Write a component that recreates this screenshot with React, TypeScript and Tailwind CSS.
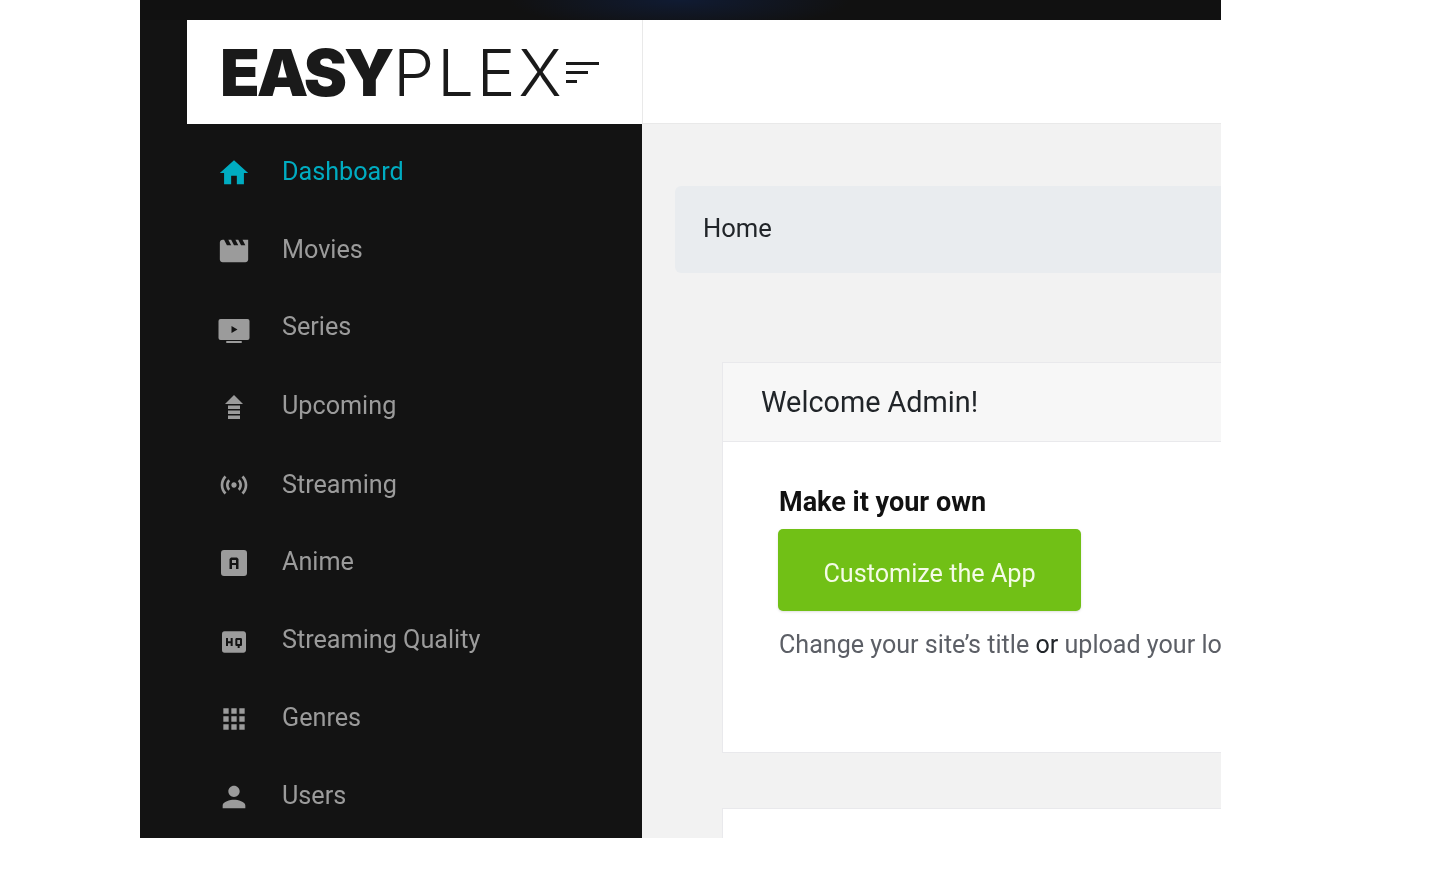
import React from "react";
import { MdHome, MdMovie, MdSensors, MdHighQuality, MdApps, MdPerson } from "react-icons/md";

const SeriesIcon = () => (
  <svg viewBox="0 0 32 24" className="h-[24px] w-[32px]" fill="currentColor">
    <path fillRule="evenodd" d="M2.500 0h27A2 2 0 0 1 31.500 2v17a2 2 0 0 1-2 2h-27a2 2 0 0 1-2-2V2a2 2 0 0 1 2-2Zm11 7v7l6-3.500Z" />
    <rect x="8" y="22" width="16" height="2" rx="1" />
  </svg>
);

const UpcomingIcon = () => (
  <svg viewBox="0 0 20 28" className="h-[28px] w-[20px]" fill="currentColor">
    <path d="M10 1 19 10H1Z" />
    <rect x="4" y="11.500" width="12" height="3.500" />
    <rect x="4" y="16.500" width="12" height="3.500" />
    <rect x="4" y="21.500" width="12" height="3.500" />
  </svg>
);

const AnimeIcon = () => (
  <svg viewBox="0 0 26 26" className="h-[26px] w-[26px]" fill="currentColor">
    <path
      fillRule="evenodd"
      d="M3 0h20a3 3 0 0 1 3 3v20a3 3 0 0 1-3 3H3a3 3 0 0 1-3-3V3a3 3 0 0 1 3-3Zm7 7.500-1.500 1.500v10h2.500v-4h4v4h2.500V9L16 7.500Zm1 2.500h4v3h-4Z"
    />
  </svg>
);

const items: { label: string; icon: React.ReactNode; active?: boolean; h: string; shift: string }[] = [
  { label: "Dashboard", icon: <MdHome size={34} />, active: true, h: "h-[78px]", shift: "mt-[2px]" },
  { label: "Movies", icon: <MdMovie size={34} />, h: "h-[78px]", shift: "mt-[2px]" },
  { label: "Series", icon: <SeriesIcon />, h: "h-[76px]", shift: "mt-[8px]" },
  { label: "Upcoming", icon: <UpcomingIcon />, h: "h-[82px]", shift: "mt-[4px]" },
  { label: "Streaming", icon: <MdSensors size={32} />, h: "h-[76px]", shift: "mt-0" },
  { label: "Anime", icon: <AnimeIcon />, h: "h-[78px]", shift: "mt-[2px]" },
  { label: "Streaming Quality", icon: <MdHighQuality size={32} />, h: "h-[78px]", shift: "mt-[4px]" },
  { label: "Genres", icon: <MdApps size={32} />, h: "h-[78px]", shift: "mt-[2px]" },
  { label: "Users", icon: <MdPerson size={34} />, h: "h-[78px]", shift: "mt-[2px]" },
];

export default function App() {
  return (
    <div className="h-[892px] w-[1448px] overflow-hidden bg-white font-['Roboto',sans-serif]">
      <div className="ml-[140px] flex h-[838px] w-[1081px] flex-col overflow-hidden blur-[0.4px]">
        <div className="h-5 shrink-0 bg-[#111111] bg-[radial-gradient(ellipse_170px_30px_at_540px_0px,#101b33,#111111)]" />
        <div className="flex min-h-0 flex-1">
          <aside className="flex w-[502px] shrink-0 flex-col bg-[#131313]">
            <div className="ml-[47px] flex h-[104px] shrink-0 items-center bg-white pl-[33px] font-['Inter',sans-serif] leading-none text-[#1a1a1a]">
              <span className="text-[65px] font-black tracking-[-3px]">EASY</span>
              <span className="ml-[2px] text-[65px] font-light tracking-[3px]">PLEX</span>
              <span className="ml-[1px] flex flex-col gap-[6px]">
                <span className="h-[3px] w-[33px] bg-[#1a1a1a]" />
                <span className="h-[3px] w-[22px] bg-[#1a1a1a]" />
                <span className="h-[3px] w-[11px] bg-[#1a1a1a]" />
              </span>
            </div>
            <nav className="flex flex-col pt-[9px]">
              {items.map((it) => (
                <div
                  key={it.label}
                  className={`flex shrink-0 items-center ${it.h} ${it.active ? "text-[#00acc1]" : "text-[#9b9b9b]"}`}
                >
                  <span className={`ml-[74px] flex w-[39px] items-center justify-center ${it.shift}`}>{it.icon}</span>
                  <span className="ml-[29px] text-[25.200px] leading-none">{it.label}</span>
                </div>
              ))}
            </nav>
          </aside>
          <div className="flex min-w-0 flex-1 flex-col bg-[#f2f2f2]">
            <div className="h-[104px] shrink-0 border-b border-l border-[#e9e9e9] bg-white" />
            <main className="pl-[33px] pt-[62px]">
              <div className="flex h-[87px] items-center rounded-l-[6px] bg-[#e9ecef] pb-[2px] pl-[28px] text-[25.600px] text-[#212529]">
                Home
              </div>
              <div className="ml-[47px] mt-[89px] h-[391px] border-y border-l border-[#e9e9ec] bg-white">
                <div className="flex h-[79px] items-center border-b border-[#e9e9ec] bg-[#f7f7f7] pl-[38px] pt-[2px] text-[28.800px] text-[#212529]">
                  Welcome Admin!
                </div>
                <div className="pl-[56px] pt-[42px]">
                  <h4 className="text-[27px] font-bold leading-[36px] text-[#111111]">Make it your own</h4>
                  <div className="-ml-px mt-[9px] flex h-[82px] w-[303px] items-center justify-center rounded-[5px] bg-[#71c016] pt-[8px] text-[25.200px] text-[#f4fbe6] shadow-sm">
                    Customize the App
                  </div>
                  <p className="mt-[16px] whitespace-nowrap text-[25.100px] leading-[36px] text-[#5c5f66]">
                    Change your site’s title <span className="text-[#212529]">or</span> upload your logo
                  </p>
                </div>
              </div>
              <div className="ml-[47px] mt-[55px] h-[40px] border-t border-l border-[#e9e9ec] bg-white" />
            </main>
          </div>
        </div>
      </div>
    </div>
  );
}
